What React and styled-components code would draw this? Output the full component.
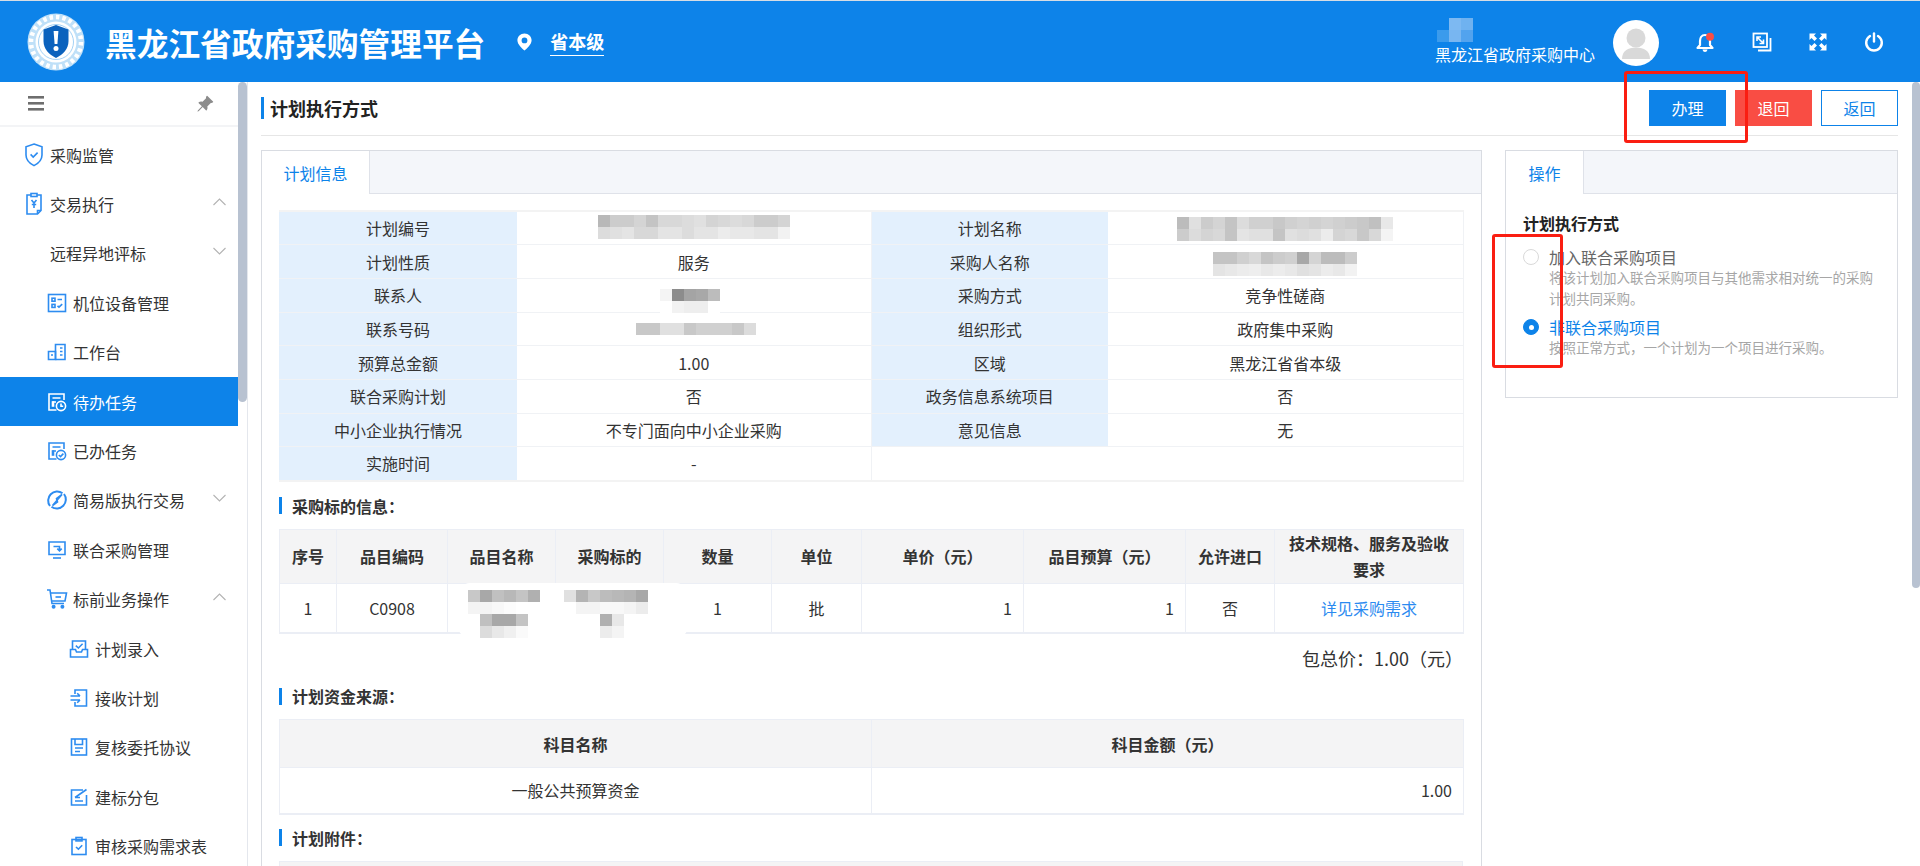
import React from 'react'
import styled, { createGlobalStyle } from 'styled-components'
import { BsPinAngleFill } from 'react-icons/bs'

const BLUE = '#0d83e9'
const FONT = '"Noto Sans CJK SC", "Noto Sans", "Liberation Sans", sans-serif'

const GlobalStyle = createGlobalStyle`
  * { box-sizing: border-box; }
  html, body { margin: 0; padding: 0; height: 100%; overflow: hidden; background: #fff; }
  body { font-family: ${FONT}; font-size: 16px; color: #333; }
`

const Page = styled.div`
  position: relative;
  width: 1920px;
  height: 866px;
  display: flex;
  flex-direction: column;
  overflow: hidden;
`

const Header = styled.header`
  flex: 0 0 82px;
  display: flex;
  align-items: center;
  padding: 0 36px 0 27px;
  background: ${BLUE};
  border-top: 1px solid #d6dde4;
  color: #fff;
`

const Logo = styled.svg`
  width: 58px;
  height: 58px;
  flex: none;
`

const Title = styled.h1`
  margin: 0 0 0 20px;
  font-size: 31.7px;
  line-height: 44px;
  font-weight: 700;
  white-space: nowrap;
`

const Region = styled.div`
  display: flex;
  align-items: center;
  gap: 17px;
  margin-left: 31px;
`

const RegionName = styled.span`
  font-size: 18px;
  line-height: 26px;
  font-weight: 700;
  padding-bottom: 1px;
  border-bottom: 1px solid #fff;
`

const UserBox = styled.div`
  margin-left: auto;
  display: flex;
  flex-direction: column;
  align-items: flex-start;
`

const UserMosaic = styled.div`
  display: grid;
  grid-template-columns: repeat(3, 12px);
  grid-auto-rows: 12px;
  margin-left: 2px;
`

const UserOrg = styled.span`
  font-size: 16px;
  line-height: 24px;
  white-space: nowrap;
`

const Avatar = styled.div`
  width: 46px;
  height: 46px;
  margin: 2px 37px 0 18px;
  border-radius: 50%;
  background: #fff;
  overflow: hidden;
  flex: none;
`

const HeadIcons = styled.div`
  display: flex;
  gap: 36px;
`

const HeadIcon = styled.svg`
  width: 20px;
  height: 20px;
  display: block;
  overflow: visible;
`

const Body = styled.div`
  flex: 1;
  min-height: 0;
  display: flex;
`

const ScrollTrack = styled.div`
  flex: 0 0 ${p => p.$width}px;
  background: #fff;
`

const ScrollThumb = styled.div`
  height: ${p => p.$height}px;
  background: #b8c2d1;
  border-radius: 5px;
`

const Sidebar = styled.aside`
  flex: 0 0 248px;
  height: 100%;
  display: flex;
  border-right: 1px solid #e4e7ed;
`

const SideColumn = styled.div`
  flex: 0 0 238px;
  overflow: hidden;
`

const SideTop = styled.div`
  height: 45px;
  display: flex;
  align-items: center;
  justify-content: space-between;
  padding: 0 24px 0 28px;
  border-bottom: 2px solid #f3f4f6;
  color: #8c8c8c;
`

const Menu = styled.ul`
  list-style: none;
  margin: 0;
  padding: 3px 0 0;
`

const paddingByLevel = [24, 47, 69]

const MenuRow = styled.li`
  height: 49.4px;
  display: flex;
  align-items: center;
  padding: 0 12px 0 ${p => paddingByLevel[p.$level]}px;
  font-size: 16px;
  white-space: nowrap;
  color: ${p => (p.$active ? '#fff' : '#333')};
  background: ${p => (p.$active ? BLUE : 'transparent')};
`

const MenuIcon = styled.svg`
  width: 20px;
  height: 20px;
  margin-right: 6px;
  flex: none;
  overflow: visible;
  color: ${p => (p.$active ? '#fff' : '#2d8cf0')};
`

const MenuGap = styled.span`
  width: 26px;
  flex: none;
`

const Chevron = styled.svg`
  width: 13px;
  height: 8px;
  margin-left: auto;
  margin-bottom: 5px;
  color: #b3b3b3;
`

const Main = styled.main`
  flex: 1;
  min-width: 0;
  height: 100%;
  display: flex;
`

const MainColumn = styled.div`
  flex: 1;
  min-width: 0;
  overflow: hidden;
  padding: 0 14px 0 13px;
`

const TitleBar = styled.div`
  height: 54px;
  display: flex;
  align-items: center;
  justify-content: space-between;
  border-bottom: 1px solid #e6e6e6;
`

const PageTitle = styled.h2`
  margin: -1px 0 0;
  font-size: 18px;
  line-height: 22px;
  font-weight: 700;
  color: #222;
  border-left: 3px solid ${BLUE};
  padding-left: 6px;
`

const Actions = styled.div`
  display: flex;
  gap: 9px;
  margin-top: -2px;
`

const Button = styled.button`
  width: 77px;
  height: 36px;
  padding: 0;
  font: 16px ${FONT};
  cursor: pointer;
  color: ${p => (p.$kind === 'plain' ? BLUE : '#fff')};
  background: ${p => (p.$kind === 'danger' ? '#f94d44' : p.$kind === 'plain' ? '#fff' : BLUE)};
  border: 1px solid ${p => (p.$kind === 'danger' ? '#f94d44' : BLUE)};
`

const Columns = styled.div`
  display: flex;
  align-items: flex-start;
  gap: 23px;
  margin-top: 14px;
  height: 900px;
`

const Panel = styled.section`
  border: 1px solid #d9dce2;
  background: #fff;
`

const MainPanel = styled(Panel)`
  flex: 0 0 1220px;
  align-self: stretch;
`

const SidePanel = styled(Panel)`
  flex: 1;
  height: 248px;
`

const Tabs = styled.div`
  height: 43px;
  display: flex;
  background: #f4f6fa;
  border-bottom: 1px solid #dfe2e9;
`

const Tab = styled.div`
  width: ${p => p.$width}px;
  margin-bottom: -1px;
  display: flex;
  align-items: center;
  justify-content: center;
  font-size: 16px;
  color: ${BLUE};
  background: #fff;
  border-right: 1px solid #dfe2e9;
`

const PanelBody = styled.div`
  padding: ${p => p.$top}px 17px 0;
`

const DataTable = styled.table`
  width: 1184px;
  table-layout: fixed;
  border-collapse: collapse;
  font-size: 16px;
  color: #333;
  border-bottom: 2px solid #ebeef5;
`

const InfoTable = styled(DataTable)`
  border-top: 2px solid #f3f3f3;
  border-bottom: 2px solid #f3f3f3;
`

const InfoLabel = styled.td`
  height: 33.7px;
  padding: 0 8px;
  text-align: center;
  line-height: 24px;
  background: #e3f0fd;
  border-bottom: 1px solid #f0f2f5;
`

const InfoValue = styled.td`
  height: 33.7px;
  padding: 0 8px;
  text-align: center;
  line-height: 24px;
  border-bottom: 1px solid #f0f2f5;
  border-right: 1px solid #f0f2f5;
`

const Mosaic = styled.div`
  display: grid;
  width: max-content;
  grid-template-columns: repeat(${p => p.$cols}, 12px);
  grid-auto-rows: 12px;
  margin: -8px auto;
  transform: translate(${p => p.$x || 0}px, ${p => p.$shift || 0}px);
`

const MosaicCell = styled.span`
  background: ${p => p.$tone};
`

const Heading = styled.h3`
  display: flex;
  align-items: center;
  gap: 10px;
  margin: ${p => p.$top}px 0 11px;
  font-size: 16px;
  line-height: 24px;
  font-weight: 700;
  color: #333;
  &::before {
    content: '';
    width: 3px;
    height: 17px;
    background: ${BLUE};
  }
`

const HeadCell = styled.th`
  height: ${p => p.$height}px;
  padding: 0;
  text-align: center;
  font-weight: 700;
  line-height: 26px;
  background: #f4f4f5;
  border: 1px solid #ebeef5;
  border-right: ${p => (p.$open ? 'none' : '1px solid #ebeef5')};
`

const BodyCell = styled.td`
  height: ${p => p.$height}px;
  padding: 0 11px;
  text-align: ${p => p.$align || 'center'};
  line-height: 24px;
  border: 1px solid #ebeef5;
  border-right: ${p => (p.$open ? 'none' : '1px solid #ebeef5')};
`

const DetailLink = styled.a`
  color: #2b8af0;
  text-decoration: none;
`

const TableWrap = styled.div`
  position: relative;
`

const Redaction = styled.div`
  position: absolute;
  left: 179px;
  top: 54px;
  width: 230px;
  height: 55px;
  padding: 7px 0 0 10px;
  display: flex;
  align-items: flex-start;
  gap: 24px;
  background: #fff;
  border-radius: 12px;
  & > div { margin: 0; }
`

const PackTotal = styled.div`
  margin: 12px 1px 0 0;
  text-align: right;
  font-size: 18px;
  line-height: 24px;
  color: #333;
`

const SideTitle = styled.div`
  font-size: 16px;
  line-height: 24px;
  font-weight: 700;
  color: #222;
`

const Option = styled.div`
  display: grid;
  grid-template-columns: 16px 1fr;
  column-gap: 10px;
  margin-top: ${p => p.$top}px;
`

const Radio = styled.span`
  width: 16px;
  height: 16px;
  margin-top: 4px;
  border-radius: 50%;
  display: flex;
  align-items: center;
  justify-content: center;
  border: 1px solid ${p => (p.$on ? BLUE : '#d9d9d9')};
  background: ${p => (p.$on ? BLUE : '#fff')};
  &::after {
    content: '';
    width: 5px;
    height: 5px;
    border-radius: 50%;
    background: ${p => (p.$on ? '#fff' : 'transparent')};
  }
`

const OptionLabel = styled.span`
  font-size: 16px;
  line-height: 24px;
  color: ${p => (p.$on ? BLUE : '#666')};
`

const OptionDesc = styled.p`
  grid-column: 2;
  margin: -2px 0 0;
  font-size: 13.5px;
  line-height: 21px;
  color: #a6a6a6;
`

const Mark = styled.div`
  position: absolute;
  border: 3px solid #fa1e12;
  border-radius: 3px;
  pointer-events: none;
  left: ${p => p.$x}px;
  top: ${p => p.$y}px;
  width: ${p => p.$w}px;
  height: ${p => p.$h}px;
`

const LogoMark = () => (
  <Logo viewBox="0 0 58 58">
    <circle cx="29" cy="29" r="28.5" fill="#bfe0f8" />
    <circle cx="29" cy="29" r="25" fill="none" stroke="#fff" strokeWidth="4.5" strokeDasharray="3.5 3" />
    <circle cx="29" cy="29" r="20.5" fill="#fff" />
    <circle cx="29" cy="29" r="17.5" fill="none" stroke="#8cc5f2" strokeWidth="0.8" />
    <path d="M29 12 L41.5 16.5 V28 C41.5 36 36 41.5 29 45 C22 41.5 16.5 36 16.5 28 V16.5 Z" fill="#0b62bd" />
    <path d="M26.6 18 H31.4 L30.4 31 H27.6 Z" fill="#fff" />
    <circle cx="29" cy="35.5" r="2.5" fill="#fff" />
  </Logo>
)

const PinIcon = () => (
  <svg width="17" height="18" viewBox="0 0 17 18">
    <path
      fillRule="evenodd"
      d="M8.5 0.5C4.4 0.5 1.4 3.5 1.4 7.3 1.4 11.6 6.2 15.6 8.5 17.6 10.8 15.6 15.6 11.6 15.6 7.3 15.6 3.5 12.6 0.5 8.5 0.5ZM8.5 4.5A2.9 2.9 0 1 1 8.5 10.3 2.9 2.9 0 1 1 8.5 4.5Z"
      fill="#fff"
    />
  </svg>
)

const AvatarFigure = () => (
  <svg width="46" height="46" viewBox="0 0 46 46">
    <circle cx="23" cy="18" r="9.5" fill="#d9d9d9" />
    <path d="M9 39 C9 31 15 27.5 23 27.5 C31 27.5 37 31 37 39 Z" fill="#d9d9d9" />
  </svg>
)

const BellIcon = () => (
  <HeadIcon viewBox="0 0 20 20">
    <path d="M9 3 C5.6 3 4 6 4 9 V13 L1.5 16 H16.5 L14 13 V9 C14 6 12.4 3 9 3 Z" fill="none" stroke="#fff" strokeWidth="2.2" strokeLinejoin="round" />
    <path d="M6.5 17.5 H11.5 C11.2 19.2 10.2 20 9 20 C7.8 20 6.8 19.2 6.5 17.5 Z" fill="#fff" />
    <circle cx="14" cy="4.8" r="4" fill="#f94d44" />
  </HeadIcon>
)

const SwitchIcon = () => (
  <HeadIcon viewBox="0 0 20 20" fill="none" stroke="#fff" strokeWidth="1.8">
    <rect x="1.5" y="1.5" width="13.5" height="13.5" />
    <path d="M18.5 6 V18.5 H6" />
    <path d="M5 5 L11.5 11.5 M5 9 V5 H9 M11.5 7.5 V11.5 H7.5" strokeWidth="1.6" />
  </HeadIcon>
)

const FullIcon = () => (
  <HeadIcon viewBox="0 0 20 20" fill="#fff">
    <path d="M1.5 1.5 H8 L6 3.5 L9 6.5 L6.5 9 L3.5 6 L1.5 8 Z" />
    <path d="M18.5 1.5 H12 L14 3.5 L11 6.5 L13.5 9 L16.5 6 L18.5 8 Z" />
    <path d="M1.5 18.5 H8 L6 16.5 L9 13.5 L6.5 11 L3.5 14 L1.5 12 Z" />
    <path d="M18.5 18.5 H12 L14 16.5 L11 13.5 L13.5 11 L16.5 14 L18.5 12 Z" />
  </HeadIcon>
)

const PowerIcon = () => (
  <HeadIcon viewBox="0 0 20 20" fill="none" stroke="#fff" strokeWidth="2.4" strokeLinecap="round">
    <path d="M10 1.5 V9.5" />
    <path d="M6 4 A7.8 7.8 0 1 0 14 4" />
  </HeadIcon>
)

const Hamburger = () => (
  <svg width="16" height="15" viewBox="0 0 16 15" fill="#6e6e6e">
    <rect width="16" height="2.6" />
    <rect y="6" width="16" height="2.6" />
    <rect y="12" width="16" height="2.6" />
  </svg>
)

const glyphs = {
  shield: (
    <>
      <path d="M10 -1 L18 1.8 V10 C18 15 14 18.6 10 20.6 C6 18.6 2 15 2 10 V1.8 Z" />
      <path d="M6.6 9.4 L9.2 12 L13.6 7.6" />
    </>
  ),
  trade: (
    <>
      <path d="M7 1 H3 V20 H13.5 L17 16.5 V1 H13" />
      <rect x="7" y="-0.5" width="6" height="3" />
      <path d="M7.5 6 L10 9 L12.5 6 M10 9 V14 M7.8 10.5 H12.2 M13.5 20 V16.5 H17" />
    </>
  ),
  device: (
    <>
      <rect x="1.5" y="1.5" width="17" height="17" />
      <rect x="5" y="5.2" width="3" height="3" />
      <rect x="5" y="11.4" width="3" height="3" />
      <path d="M10.5 6.5 H15 M10.5 12.8 L12 14.2 L15.2 11.2" />
    </>
  ),
  desk: (
    <>
      <path d="M8.5 17.5 H1.5 V9.5 H8.5 Z" />
      <path d="M8.5 17.5 V2.5 H18 V17.5 H8.5" />
      <path d="M13 6 H15.5 M13 9.5 H15.5 M13 13 H15.5 M4 13 H6" />
    </>
  ),
  todo: (
    <>
      <path d="M9.5 18 H2 V2 H17 V8" />
      <path d="M5.5 6 H13.5 M5.5 10 H9" />
      <rect x="5.5" y="10" width="1" height="4" />
      <circle cx="14" cy="14" r="4.6" />
      <path d="M14 11.6 V14.2 H16.2" />
    </>
  ),
  done: (
    <>
      <path d="M9.5 18 H2 V2 H17 V8" />
      <path d="M5.5 6 H13.5 M5.5 10 H9" />
      <rect x="5.5" y="10" width="1" height="4" />
      <circle cx="14" cy="14" r="4.6" />
      <path d="M11.8 14 L13.5 15.6 L16.4 12.6" />
    </>
  ),
  simple: (
    <>
      <path d="M15.5 3.3 A9 9 0 0 0 3 16" strokeWidth="2" />
      <path d="M4.5 16.7 A9 9 0 0 0 17 4" strokeWidth="2" />
      <path d="M15 4.5 L5.5 15.5 L10.5 12 L9.5 8.5 Z" fill="currentColor" />
    </>
  ),
  union: (
    <>
      <path d="M2 2 H18 V14.5 H2 Z" />
      <path d="M6 18 H14" />
      <path d="M6.5 6.5 H12.5 V10.5 M10.3 8.6 L12.5 10.8 L14.7 8.6" />
    </>
  ),
  cart: (
    <>
      <path d="M0 1 H3 L5 14.5 H17" />
      <path d="M3.6 4 H19.5 L18 12 H5" />
      <path d="M8.5 8 H14" />
      <circle cx="6.6" cy="17.8" r="1.2" fill="currentColor" />
      <circle cx="15.4" cy="17.8" r="1.2" fill="currentColor" />
    </>
  ),
  inbox: (
    <>
      <path d="M3.5 10 V2 H16.5 V10" />
      <path d="M1.5 10.5 H6.5 L7.5 13 H12.5 L13.5 10.5 H18.5 V18 H1.5 Z" />
      <path d="M6.8 6.6 L9.4 9 L13.6 4.8" />
    </>
  ),
  receive: (
    <>
      <path d="M6 6 V2 H17.5 V18 H6 V14" />
      <path d="M1.5 8 H11 M8.2 5.2 L11 8 M1.5 12 H11 M8.2 14.8 L11 12" />
    </>
  ),
  review: (
    <>
      <rect x="2.5" y="2" width="15" height="16" />
      <path d="M6 2 V7.5 H13.5 V2 M6 11 H14 M6 14.5 H11" />
    </>
  ),
  pack: (
    <>
      <path d="M14 3 H2.5 V18 H17.5 V8" />
      <path d="M6 10.5 L17.5 2.5 M6 14 H14 M6 10.5 H11" />
    </>
  ),
  audit: (
    <>
      <rect x="3" y="3.5" width="14" height="15" />
      <rect x="7" y="1.5" width="6" height="3.4" />
      <path d="M7 11 L9.4 13.2 L13.2 9.2" />
    </>
  )
}

const menu = [
  { label: '采购监管', icon: 'shield', level: 0 },
  { label: '交易执行', icon: 'trade', level: 0, arrow: 'up' },
  { label: '远程异地评标', level: 0, arrow: 'down' },
  { label: '机位设备管理', icon: 'device', level: 1 },
  { label: '工作台', icon: 'desk', level: 1 },
  { label: '待办任务', icon: 'todo', level: 1, active: true },
  { label: '已办任务', icon: 'done', level: 1 },
  { label: '简易版执行交易', icon: 'simple', level: 1, arrow: 'down' },
  { label: '联合采购管理', icon: 'union', level: 1 },
  { label: '标前业务操作', icon: 'cart', level: 1, arrow: 'up' },
  { label: '计划录入', icon: 'inbox', level: 2 },
  { label: '接收计划', icon: 'receive', level: 2 },
  { label: '复核委托协议', icon: 'review', level: 2 },
  { label: '建标分包', icon: 'pack', level: 2 },
  { label: '审核采购需求表', icon: 'audit', level: 2 }
]

const toTone = t => (t.length === 2 ? `#${t}${t}${t}` : `#${t}`)

const Blur = ({ rows, shift, x }) => {
  const parsed = rows.map(r => r.split(' '))
  return (
    <Mosaic $cols={parsed[0].length} $shift={shift} $x={x}>
      {parsed.flat().map((t, i) => (
        <MosaicCell key={i} $tone={toTone(t)} />
      ))}
    </Mosaic>
  )
}

const blurUser = ['0d83e9 7db9f2 6fb2f0', '3b9bec 78b6f1 52a3ee']
const blurPlanNo = [
  'b8 cc cc d4 c4 d8 d8 dc e0 d4 d8 dc d8 cc cc d4',
  'dc e0 e4 d8 d8 e4 e4 dc e4 e4 ec e8 e8 e4 e4 f2'
]
const blurPlanName = [
  'bc e0 cc d4 c4 dc d0 d0 c8 d0 d4 d0 d4 d0 cc c8 c0 e8',
  'cc dc d4 d8 c4 e4 e0 e0 c4 e0 dc e0 ec d4 d8 c8 d8 f4'
]
const blurBuyer = [
  'c4 c4 d0 d8 c4 cc d0 a8 d4 bc bc cc',
  'e4 e8 ec ee e8 ec e8 e0 e4 ec e8 f2'
]
const blurContact = ['f4 8c a4 a8 bc', 'ff f2 ee ee ff']
const blurPhone = ['c8 c8 e0 e0 c8 d0 d0 d0 c8 dc']
const blurItemName = [
  'c8 a8 c0 b8 c4 b0',
  'f4 f4 f8 fc ff ff',
  'ff c0 a8 a8 c4 ff',
  'ff dc e8 f0 fa ff'
]
const blurTarget = [
  'e0 b4 c8 bc b8 b4 a8',
  'ff f4 f4 f8 f8 f4 ec',
  'ff ff ff b0 e8 ff ff',
  'ff ff ff ec f4 ff ff'
]

const info = [
  ['计划编号', <Blur rows={blurPlanNo} shift={-1} />, '计划名称', <Blur rows={blurPlanName} shift={1} />],
  ['计划性质', '服务', '采购人名称', <Blur rows={blurBuyer} shift={2} />],
  ['联系人', <Blur rows={blurContact} shift={6} x={-4} />, '采购方式', '竞争性磋商'],
  ['联系号码', <Blur rows={blurPhone} shift={2} x={2} />, '组织形式', '政府集中采购'],
  ['预算总金额', '1.00', '区域', '黑龙江省省本级'],
  ['联合采购计划', '否', '政务信息系统项目', '否'],
  ['中小企业执行情况', '不专门面向中小企业采购', '意见信息', '无']
]

const itemColumns = [57, 111, 108, 108, 108, 90, 162, 162, 89, 189]

const itemHead = ['序号', '品目编码', '品目名称', '采购标的', '数量', '单位', '单价（元）', '品目预算（元）', '允许进口']

function App() {
  return (
    <Page>
      <GlobalStyle />
      <Header>
        <LogoMark />
        <Title>黑龙江省政府采购管理平台</Title>
        <Region>
          <PinIcon />
          <RegionName>省本级</RegionName>
        </Region>
        <UserBox>
          <UserMosaic>
            {blurUser
              .join(' ')
              .split(' ')
              .map((t, i) => (
                <MosaicCell key={i} $tone={toTone(t)} />
              ))}
          </UserMosaic>
          <UserOrg>黑龙江省政府采购中心</UserOrg>
        </UserBox>
        <Avatar>
          <AvatarFigure />
        </Avatar>
        <HeadIcons>
          <BellIcon />
          <SwitchIcon />
          <FullIcon />
          <PowerIcon />
        </HeadIcons>
      </Header>
      <Body>
        <Sidebar>
          <SideColumn>
            <SideTop>
              <Hamburger />
              <BsPinAngleFill size={18} />
            </SideTop>
            <Menu>
              {menu.map(item => (
                <MenuRow key={item.label} $level={item.level} $active={item.active}>
                  {item.icon ? (
                    <MenuIcon
                      viewBox="0 0 20 20"
                      fill="none"
                      stroke="currentColor"
                      strokeWidth="1.6"
                      $active={item.active}
                    >
                      {glyphs[item.icon]}
                    </MenuIcon>
                  ) : (
                    <MenuGap />
                  )}
                  {item.label}
                  {item.arrow && (
                    <Chevron viewBox="0 0 13 8" fill="none" stroke="currentColor" strokeWidth="1.1">
                      <path d={item.arrow === 'up' ? 'M0.5 7 L6.5 1 L12.5 7' : 'M0.5 1 L6.5 7 L12.5 1'} />
                    </Chevron>
                  )}
                </MenuRow>
              ))}
            </Menu>
          </SideColumn>
          <ScrollTrack $width={9}>
            <ScrollThumb $height={320} />
          </ScrollTrack>
        </Sidebar>
        <Main>
          <MainColumn>
            <TitleBar>
              <PageTitle>计划执行方式</PageTitle>
              <Actions>
                <Button>办理</Button>
                <Button $kind="danger">退回</Button>
                <Button $kind="plain">返回</Button>
              </Actions>
            </TitleBar>
            <Columns>
              <MainPanel>
                <Tabs>
                  <Tab $width={108}>计划信息</Tab>
                </Tabs>
                <PanelBody $top={16}>
                  <InfoTable>
                    <colgroup>
                      <col width="238" />
                      <col width="354" />
                      <col width="237" />
                      <col width="355" />
                    </colgroup>
                    <tbody>
                      {info.map(row => (
                        <tr key={row[0]}>
                          <InfoLabel>{row[0]}</InfoLabel>
                          <InfoValue>{row[1]}</InfoValue>
                          <InfoLabel>{row[2]}</InfoLabel>
                          <InfoValue>{row[3]}</InfoValue>
                        </tr>
                      ))}
                      <tr>
                        <InfoLabel>实施时间</InfoLabel>
                        <InfoValue>-</InfoValue>
                        <InfoValue colSpan={2} />
                      </tr>
                    </tbody>
                  </InfoTable>

                  <Heading $top={12}>采购标的信息：</Heading>
                  <TableWrap>
                    <DataTable>
                      <colgroup>
                        {itemColumns.map((w, i) => (
                          <col key={i} width={w} />
                        ))}
                      </colgroup>
                      <thead>
                        <tr>
                          {itemHead.map((h, i) => (
                            <HeadCell key={h} $height={54} $open={i === 8}>
                              {h}
                            </HeadCell>
                          ))}
                          <HeadCell $height={54}>
                            技术规格、服务及验收
                            <br />
                            要求
                          </HeadCell>
                        </tr>
                      </thead>
                      <tbody>
                        <tr>
                          <BodyCell $height={50}>1</BodyCell>
                          <BodyCell $height={50}>C0908</BodyCell>
                          <BodyCell $height={50} />
                          <BodyCell $height={50} />
                          <BodyCell $height={50}>1</BodyCell>
                          <BodyCell $height={50}>批</BodyCell>
                          <BodyCell $height={50} $align="right">1</BodyCell>
                          <BodyCell $height={50} $align="right">1</BodyCell>
                          <BodyCell $height={50} $open>否</BodyCell>
                          <BodyCell $height={50}>
                            <DetailLink>详见采购需求</DetailLink>
                          </BodyCell>
                        </tr>
                      </tbody>
                    </DataTable>
                    <Redaction>
                      <Blur rows={blurItemName} />
                      <Blur rows={blurTarget} />
                    </Redaction>
                  </TableWrap>
                  <PackTotal>包总价：1.00（元）</PackTotal>

                  <Heading $top={14}>计划资金来源：</Heading>
                  <DataTable>
                    <colgroup>
                      <col width="592" />
                      <col width="592" />
                    </colgroup>
                    <thead>
                      <tr>
                        <HeadCell $height={48}>科目名称</HeadCell>
                        <HeadCell $height={48}>科目金额（元）</HeadCell>
                      </tr>
                    </thead>
                    <tbody>
                      <tr>
                        <BodyCell $height={46}>一般公共预算资金</BodyCell>
                        <BodyCell $height={46} $align="right">1.00</BodyCell>
                      </tr>
                    </tbody>
                  </DataTable>

                  <Heading $top={11}>计划附件：</Heading>
                  <DataTable>
                    <thead>
                      <tr>
                        <HeadCell $height={47} />
                      </tr>
                    </thead>
                  </DataTable>
                </PanelBody>
              </MainPanel>
              <SidePanel>
                <Tabs>
                  <Tab $width={78}>操作</Tab>
                </Tabs>
                <PanelBody $top={17}>
                  <SideTitle>计划执行方式</SideTitle>
                  <Option $top={10}>
                    <Radio />
                    <OptionLabel>加入联合采购项目</OptionLabel>
                    <OptionDesc>将该计划加入联合采购项目与其他需求相对统一的采购计划共同采购。</OptionDesc>
                  </Option>
                  <Option $top={6}>
                    <Radio $on />
                    <OptionLabel $on>非联合采购项目</OptionLabel>
                    <OptionDesc>按照正常方式，一个计划为一个项目进行采购。</OptionDesc>
                  </Option>
                </PanelBody>
              </SidePanel>
            </Columns>
          </MainColumn>
          <ScrollTrack $width={8}>
            <ScrollThumb $height={506} />
          </ScrollTrack>
        </Main>
      </Body>
      <Mark $x={1624} $y={71} $w={124} $h={72} />
      <Mark $x={1492} $y={234} $w={71} $h={134} />
    </Page>
  )
}

export default App
